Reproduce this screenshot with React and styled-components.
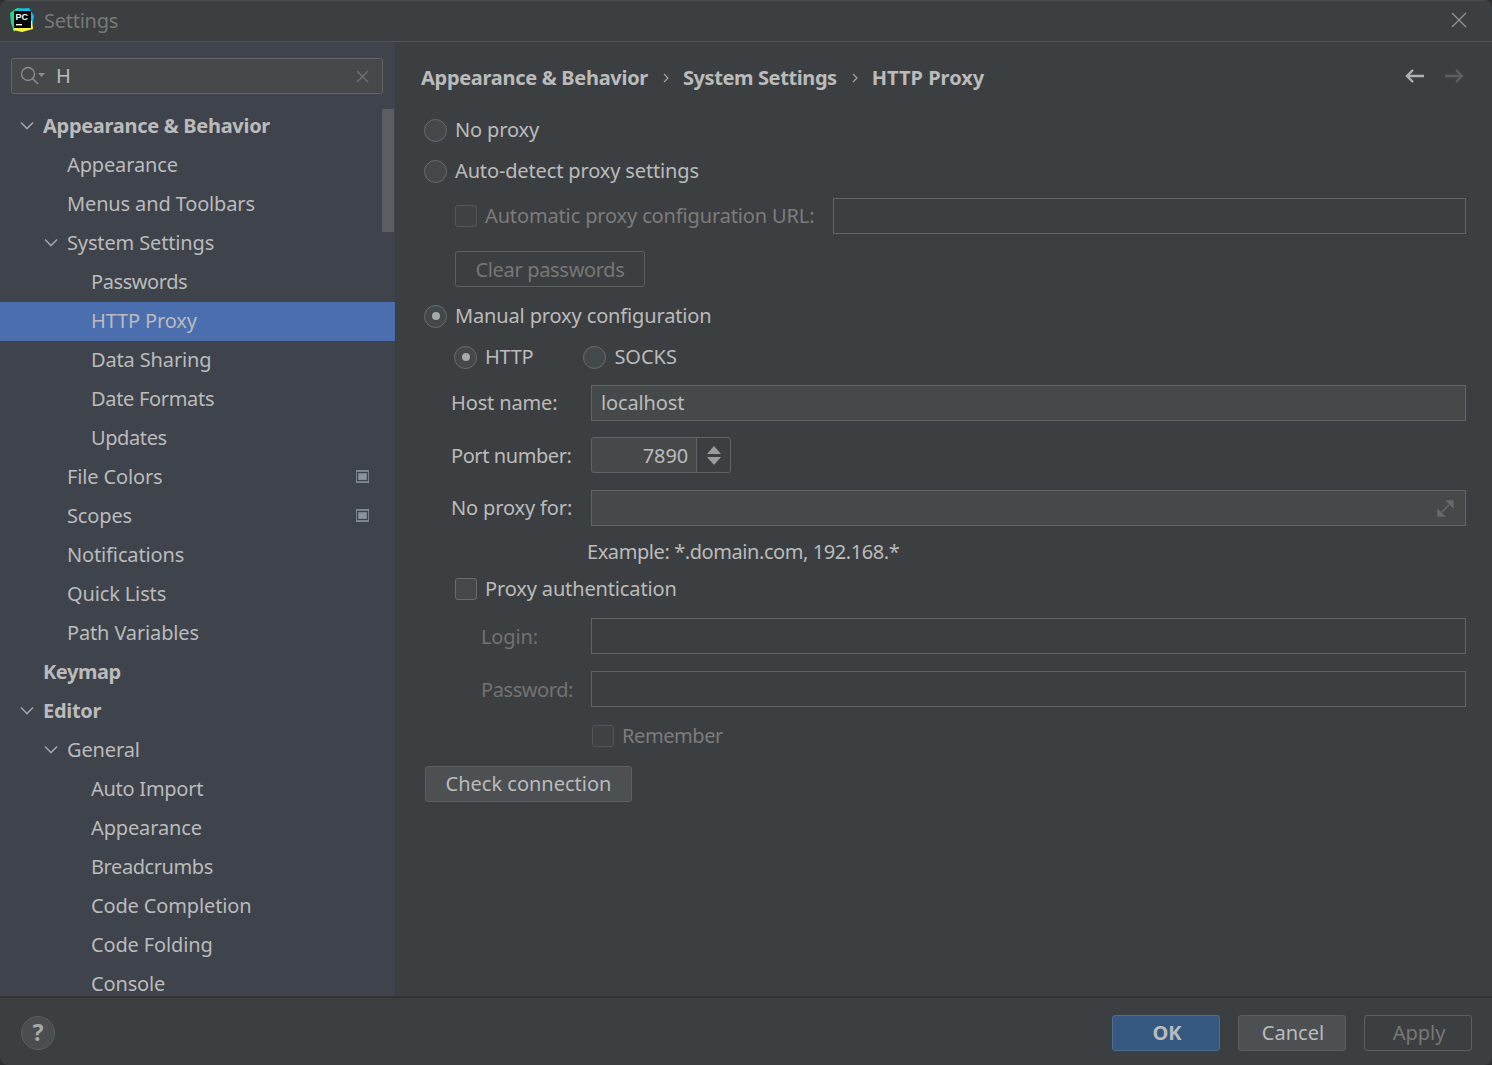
import React from 'react';
import styled, { createGlobalStyle } from 'styled-components';

const GlobalStyle = createGlobalStyle`
  html, body {
    margin: 0;
    padding: 0;
    height: 100%;
    background: #2e2f30;
  }
  body {
    font-family: "Noto Sans", "Open Sans", sans-serif;
    font-size: 20px;
    color: #bbbbbb;
  }
`;

const Root = styled.div`
  display: flex;
  flex-direction: column;
  width: 1492px;
  height: 1065px;
  overflow: hidden;
  background: #3c3f41;
  border-radius: 8px;
`;

const Text = styled.span`
  margin-bottom: ${props => props.$mb ?? 2}px;
  letter-spacing: ${props => props.$sp ?? -0.14}px;
  white-space: nowrap;
`;

const TitleBar = styled.div`
  display: flex;
  flex-shrink: 0;
  align-items: center;
  box-sizing: border-box;
  height: 42px;
  padding: 0 25px 2px 9px;
  border-top: 1px solid #4a4c4e;
  border-bottom: 1px solid #515354;
`;

const WindowTitle = styled.div`
  flex-grow: 1;
  margin-left: 9px;
  font-size: 20px;
  letter-spacing: -0.25px;
  color: #787878;
`;

const Body = styled.div`
  display: flex;
  flex-grow: 1;
  min-height: 0;
`;

const Sidebar = styled.div`
  display: flex;
  flex-direction: column;
  flex-shrink: 0;
  position: relative;
  width: 395px;
  overflow: hidden;
  background: #3e434c;
`;

const SearchBox = styled.div`
  display: flex;
  flex-shrink: 0;
  align-items: center;
  box-sizing: border-box;
  width: 372px;
  height: 36px;
  margin: 16px 0 13px 11px;
  padding: 0 13px 0 8px;
  background: #45494a;
  border: 1px solid #646464;
  border-radius: 3px;
`;

const SearchText = styled.div`
  flex-grow: 1;
  margin-left: 10px;
  line-height: 1;
`;

const TreeRow = styled.div`
  display: flex;
  flex-shrink: 0;
  align-items: center;
  box-sizing: border-box;
  height: 39px;
  padding: 0 26px 2px ${props => props.$level * 24 + 43}px;
  position: relative;
  font-weight: ${props => (props.$bold ? 700 : 400)};
  background: ${props => (props.$selected ? '#4b6eaf' : 'transparent')};
`;

const TreeChevron = styled.svg`
  position: absolute;
  left: ${props => props.$level * 24 + 20}px;
  top: 12px;
  width: 14px;
  height: 14px;
`;

const TreeLabel = styled.div`
  flex-grow: 1;
  white-space: nowrap;
  letter-spacing: ${props => props.$sp}px;
`;

const ScrollThumb = styled.div`
  position: absolute;
  top: 67px;
  right: 1px;
  width: 12px;
  height: 123px;
  background: #5a5d61;
`;

const Main = styled.div`
  display: flex;
  flex-direction: column;
  flex-grow: 1;
  min-width: 0;
  padding: 0 26px;
`;

const Breadcrumbs = styled.div`
  display: flex;
  flex-shrink: 0;
  align-items: center;
  height: 73px;
  font-weight: 700;
`;

const CrumbSep = styled.svg`
  width: 12px;
  height: 12px;
  margin: 0 11px 2px 12px;
`;

const NavArrows = styled.div`
  display: flex;
  gap: 21px;
  margin: 0 1px 6px auto;
`;

const Row = styled.div`
  display: flex;
  flex-shrink: 0;
  align-items: center;
  height: ${props => props.$h || 30}px;
  margin-top: ${props => props.$top || 0}px;
  padding-left: ${props => props.$indent || 0}px;
  color: ${props => (props.$dim ? '#7c7c7c' : '#bbbbbb')};
`;

const Radio = styled.div`
  display: flex;
  flex-shrink: 0;
  align-items: center;
  justify-content: center;
  box-sizing: border-box;
  width: 23px;
  height: 23px;
  margin-left: ${props => props.$left || 0}px;
  margin-right: 8px;
  background: #43494a;
  border: 1px solid #6b6b6b;
  border-radius: 50%;

  &::after {
    content: '';
    display: ${props => (props.$on ? 'block' : 'none')};
    width: 8px;
    height: 8px;
    background: #a9a9a9;
    border-radius: 50%;
  }
`;

const Check = styled.div`
  flex-shrink: 0;
  box-sizing: border-box;
  width: 22px;
  height: 22px;
  margin-right: 8px;
  background: ${props => (props.$dim ? '#3f4243' : '#43494a')};
  border: 1px solid ${props => (props.$dim ? '#545556' : '#6b6b6b')};
  border-radius: 3px;
`;

const FieldLabel = styled.div`
  display: flex;
  flex-shrink: 0;
  align-items: center;
  box-sizing: border-box;
  width: 170px;
  height: 100%;
  padding-left: ${props => props.$pad}px;
  color: ${props => (props.$dim ? '#727272' : '#bbbbbb')};
`;

const Input = styled.div`
  display: flex;
  flex-grow: 1;
  align-items: center;
  justify-content: space-between;
  box-sizing: border-box;
  height: 100%;
  margin-left: ${props => props.$left || 0}px;
  padding: 0 10px 0 9px;
  background: ${props => (props.$off ? 'transparent' : '#45494a')};
  border: 1px solid #646464;
`;

const Spinner = styled.div`
  display: flex;
  box-sizing: border-box;
  width: 140px;
  height: 100%;
  background: #45494a;
  border: 1px solid #646464;
  border-radius: 3px;
`;

const SpinnerValue = styled.div`
  display: flex;
  flex-grow: 1;
  align-items: center;
  justify-content: flex-end;
  padding-right: 8px;
  border-right: 1px solid #646464;
`;

const SpinnerArrows = styled.div`
  display: flex;
  flex-direction: column;
  flex-shrink: 0;
  align-items: center;
  justify-content: center;
  gap: 3px;
  width: 33px;
  background: #3c3f41;
  border-radius: 0 3px 3px 0;
`;

const Button = styled.div`
  display: flex;
  align-items: center;
  justify-content: center;
  box-sizing: border-box;
  width: ${props => props.$w}px;
  height: 36px;
  font-weight: ${props => (props.$primary ? 700 : 400)};
  color: ${props => (props.$off ? '#777777' : '#bbbbbb')};
  background: ${props => (props.$primary ? '#365880' : props.$off ? 'transparent' : '#4c5052')};
  border: 1px solid ${props => (props.$primary ? '#4c708c' : '#5e6060')};
  border-radius: 3px;
`;

const FooterButton = styled(Button)`
  padding-left: 2px;
`;

const Footer = styled.div`
  display: flex;
  flex-shrink: 0;
  align-items: center;
  box-sizing: border-box;
  height: 69px;
  padding: 2px 20px 0 21px;
  gap: 18px;
  border-top: 2px solid #323232;
`;

const Help = styled.div`
  display: flex;
  align-items: center;
  justify-content: center;
  box-sizing: border-box;
  width: 34px;
  height: 34px;
  margin-right: auto;
  font-weight: 700;
  font-size: 23px;
  color: #a8a8a8;
  background: #4b4e50;
  border: 1px solid #5b5e60;
  border-radius: 50%;
`;

const tree = [
  { label: 'Appearance & Behavior', level: 0, bold: true, open: true },
  { label: 'Appearance', level: 1 },
  { label: 'Menus and Toolbars', level: 1 },
  { label: 'System Settings', level: 1, open: true },
  { label: 'Passwords', level: 2, sp: -0.42 },
  { label: 'HTTP Proxy', level: 2, selected: true },
  { label: 'Data Sharing', level: 2 },
  { label: 'Date Formats', level: 2, sp: -0.32 },
  { label: 'Updates', level: 2, sp: -0.4 },
  { label: 'File Colors', level: 1, project: true },
  { label: 'Scopes', level: 1, project: true },
  { label: 'Notifications', level: 1 },
  { label: 'Quick Lists', level: 1 },
  { label: 'Path Variables', level: 1 },
  { label: 'Keymap', level: 0, bold: true, sp: -0.45 },
  { label: 'Editor', level: 0, bold: true, open: true },
  { label: 'General', level: 1, open: true },
  { label: 'Auto Import', level: 2, sp: -0.26 },
  { label: 'Appearance', level: 2 },
  { label: 'Breadcrumbs', level: 2, sp: -0.42 },
  { label: 'Code Completion', level: 2 },
  { label: 'Code Folding', level: 2 },
  { label: 'Console', level: 2 },
];

function PyCharmLogo() {
  return (
    <svg width="26" height="26" viewBox="0 0 26 26">
      <polygon points="1,6 8,1 16,2 14,14 5,25 2,16" fill="#21d789" />
      <polygon points="8,2 20,1 25,9 23,19 12,12" fill="#07c3f2" />
      <polygon points="4,23 12,12 23,14 24,22 13,25" fill="#fcf84a" />
      <rect x="5" y="4" width="17" height="17" fill="#000" />
      <text x="6.5" y="12.5" fontSize="9" fontWeight="700" fontFamily="Liberation Sans" fill="#fff">PC</text>
      <rect x="7" y="17" width="6" height="1.4" fill="#fff" />
    </svg>
  );
}

function ProjectIcon() {
  return (
    <svg width="13" height="13" viewBox="0 0 13 13">
      <rect width="13" height="13" fill="#7e8993" />
      <rect x="1.5" y="2.5" width="10" height="8" fill="none" stroke="#3e434c" strokeWidth="1.2" />
      <rect x="3" y="4.5" width="7" height="5" fill="#8c96a1" />
    </svg>
  );
}

function Chevron({ level }) {
  return (
    <TreeChevron $level={level} viewBox="0 0 14 14">
      <path d="M1 3.5 L7 9.5 L13 3.5" fill="none" stroke="#a0a3a6" strokeWidth="1.6" />
    </TreeChevron>
  );
}

function CrumbChevron() {
  return (
    <CrumbSep viewBox="0 0 12 12">
      <path d="M4 2 L8 6 L4 10" fill="none" stroke="#a0a3a6" strokeWidth="1.2" />
    </CrumbSep>
  );
}

function ArrowLeft() {
  return (
    <svg width="20" height="16" viewBox="0 0 20 16">
      <path d="M20 8 H3 M9 2 L3 8 L9 14" fill="none" stroke="#afb1b3" strokeWidth="2.4" />
    </svg>
  );
}

function ArrowRight() {
  return (
    <svg width="20" height="16" viewBox="0 0 20 16">
      <path d="M0 8 H17 M11 2 L17 8 L11 14" fill="none" stroke="#5d5f61" strokeWidth="2.4" />
    </svg>
  );
}

export default function App() {
  return (
    <Root>
      <GlobalStyle />
      <TitleBar>
        <PyCharmLogo />
        <WindowTitle>Settings</WindowTitle>
        <svg width="16" height="16" viewBox="0 0 16 16">
          <path d="M1 1 L15 15 M15 1 L1 15" stroke="#8f9193" strokeWidth="1.4" />
        </svg>
      </TitleBar>
      <Body>
        <Sidebar>
          <SearchBox>
            <svg width="26" height="20" viewBox="0 0 26 20">
              <circle cx="8" cy="8" r="6.5" fill="none" stroke="#8a8d8f" strokeWidth="1.4" />
              <path d="M12.5 12.5 L18 18" stroke="#8a8d8f" strokeWidth="1.6" />
              <path d="M18 7 H25 L21.5 11 Z" fill="#8a8d8f" />
            </svg>
            <SearchText>H</SearchText>
            <svg width="13" height="13" viewBox="0 0 13 13">
              <path d="M1 1 L12 12 M12 1 L1 12" stroke="#6f7274" strokeWidth="1.4" />
            </svg>
          </SearchBox>
          {tree.map(item => (
            <TreeRow key={item.label + item.level} $level={item.level} $bold={item.bold} $selected={item.selected}>
              {item.open && <Chevron level={item.level} />}
              <TreeLabel $sp={item.sp ?? (item.bold ? -0.3 : -0.14)}>{item.label}</TreeLabel>
              {item.project && <ProjectIcon />}
            </TreeRow>
          ))}
          <ScrollThumb />
        </Sidebar>
        <Main>
          <Breadcrumbs>
            <Text $sp={-0.3}>Appearance &amp; Behavior</Text>
            <CrumbChevron />
            <Text $sp={-0.4}>System Settings</Text>
            <CrumbChevron />
            <Text $sp={0}>HTTP Proxy</Text>
            <NavArrows>
              <ArrowLeft />
              <ArrowRight />
            </NavArrows>
          </Breadcrumbs>
          <Row $indent={3}><Radio /><Text>No proxy</Text></Row>
          <Row $indent={3} $top={11}><Radio /><Text>Auto-detect proxy settings</Text></Row>
          <Row $indent={34} $top={12} $h={36} $dim>
            <Check $dim />
            <Text>Automatic proxy configuration URL:</Text>
            <Input $off $left={19} />
          </Row>
          <Row $indent={34} $top={17} $h={36}>
            <Button $w={190} $off><Text $sp={-0.32} $mb={0}>Clear passwords</Text></Button>
          </Row>
          <Row $indent={3} $top={14}><Radio $on /><Text>Manual proxy configuration</Text></Row>
          <Row $indent={33} $top={11}>
            <Radio $on /><Text $sp={-0.3}>HTTP</Text>
            <Radio $left={50} /><Text $sp={0}>SOCKS</Text>
          </Row>
          <Row $top={13} $h={36}>
            <FieldLabel $pad={30}><Text>Host name:</Text></FieldLabel>
            <Input><Text>localhost</Text></Input>
          </Row>
          <Row $top={16} $h={36}>
            <FieldLabel $pad={30}><Text $sp={-0.42} $mb={0}>Port number:</Text></FieldLabel>
            <Spinner>
              <SpinnerValue><Text $mb={0}>7890</Text></SpinnerValue>
              <SpinnerArrows>
                <svg width="14" height="8" viewBox="0 0 14 8"><path d="M0 8 L7 0 L14 8 Z" fill="#9a9c9e" /></svg>
                <svg width="14" height="8" viewBox="0 0 14 8"><path d="M0 0 L7 8 L14 0 Z" fill="#9a9c9e" /></svg>
              </SpinnerArrows>
            </Spinner>
          </Row>
          <Row $top={17} $h={36}>
            <FieldLabel $pad={30}><Text>No proxy for:</Text></FieldLabel>
            <Input>
              <span />
              <svg width="19" height="19" viewBox="0 0 19 19">
                <path d="M11 2 H17 V8 Z M2 11 V17 H8 Z M13 6 L6 13" fill="#666a6c" stroke="#666a6c" strokeWidth="1.4" />
              </svg>
            </Input>
          </Row>
          <Row $indent={166} $top={15} $h={22}><Text $sp={-0.42}>Example: *.domain.com, 192.168.*</Text></Row>
          <Row $indent={34} $top={11}><Check /><Text>Proxy authentication</Text></Row>
          <Row $top={14} $h={36}>
            <FieldLabel $pad={60} $dim><Text $mb={0}>Login:</Text></FieldLabel>
            <Input $off />
          </Row>
          <Row $top={17} $h={36}>
            <FieldLabel $pad={60} $dim><Text $sp={-0.42} $mb={0}>Password:</Text></FieldLabel>
            <Input $off />
          </Row>
          <Row $indent={171} $top={14} $dim><Check $dim /><Text $sp={-0.42}>Remember</Text></Row>
          <Row $indent={4} $top={15} $h={36}>
            <Button $w={207}><Text $sp={0}>Check connection</Text></Button>
          </Row>
        </Main>
      </Body>
      <Footer>
        <Help><Text $sp={0} $mb={1}>?</Text></Help>
        <FooterButton $w={108} $primary><Text $sp={0} $mb={0}>OK</Text></FooterButton>
        <FooterButton $w={108}><Text $sp={0} $mb={0}>Cancel</Text></FooterButton>
        <FooterButton $w={108} $off><Text $sp={0} $mb={0}>Apply</Text></FooterButton>
      </Footer>
    </Root>
  );
}
